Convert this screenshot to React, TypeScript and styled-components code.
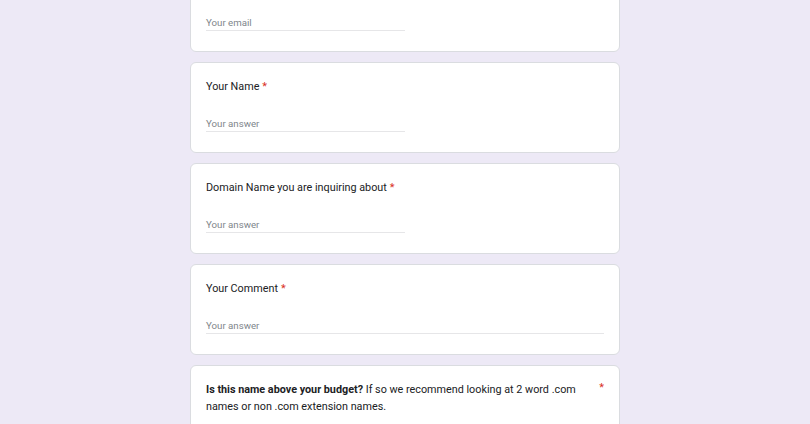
import styled, { createGlobalStyle } from "styled-components";

const GlobalStyle = createGlobalStyle`
  html, body {
    margin: 0;
    padding: 0;
    background: #ede9f6;
    font-family: Roboto, "Liberation Sans", Arial, sans-serif;
    overflow: hidden;
  }
`;

const Page = styled.div`
  display: flex;
  justify-content: center;
  height: 424px;
  overflow: hidden;
`;

const FormList = styled.div`
  display: flex;
  flex-direction: column;
  gap: 10px;
  width: 430px;
  margin-top: -39px;
`;

const Card = styled.div`
  box-sizing: border-box;
  background: #fff;
  border: 1px solid #dadce0;
  border-radius: 6px;
  padding: 15px 15px 20px;
  flex-shrink: 0;
`;

const TitleRow = styled.div`
  display: flex;
  align-items: flex-start;
  justify-content: space-between;
  gap: 12px;
`;

const Title = styled.div<{ $long?: boolean }>`
  font-size: 10.8px;
  line-height: ${(p) => (p.$long ? "17px" : "18px")};
  color: #202124;
  max-width: ${(p) => (p.$long ? "385px" : "none")};

  b {
    font-weight: 700;
  }
`;

const Star = styled.span`
  color: #d93025;
  font-size: 11px;
  margin-left: 3px;
`;

const AnswerField = styled.div<{ $wide?: boolean }>`
  box-sizing: border-box;
  width: ${(p) => (p.$wide ? "100%" : "50%")};
  margin-top: 21px;
  height: 15px;
  font-size: 9.7px;
  line-height: 14px;
  color: #80868b;
  border-bottom: 1px solid #e6e6e8;
`;

type Question = {
  title: string;
  placeholder: string;
  wide?: boolean;
};

const questions: Question[] = [
  { title: "Email", placeholder: "Your email" },
  { title: "Your Name", placeholder: "Your answer" },
  { title: "Domain Name you are inquiring about", placeholder: "Your answer" },
  { title: "Your Comment", placeholder: "Your answer", wide: true },
];

const App = () => {
  return (
    <>
      <GlobalStyle />
      <Page>
        <FormList>
          {questions.map((q) => (
            <Card key={q.title}>
              <Title>
                {q.title}
                <Star>*</Star>
              </Title>
              <AnswerField $wide={q.wide}>{q.placeholder}</AnswerField>
            </Card>
          ))}
          <Card>
            <TitleRow>
              <Title $long>
                <b>Is this name above your budget?</b> If so we recommend
                looking at 2 word .com names or non .com extension names.
              </Title>
              <Star>*</Star>
            </TitleRow>
          </Card>
        </FormList>
      </Page>
    </>
  );
};

export default App;
